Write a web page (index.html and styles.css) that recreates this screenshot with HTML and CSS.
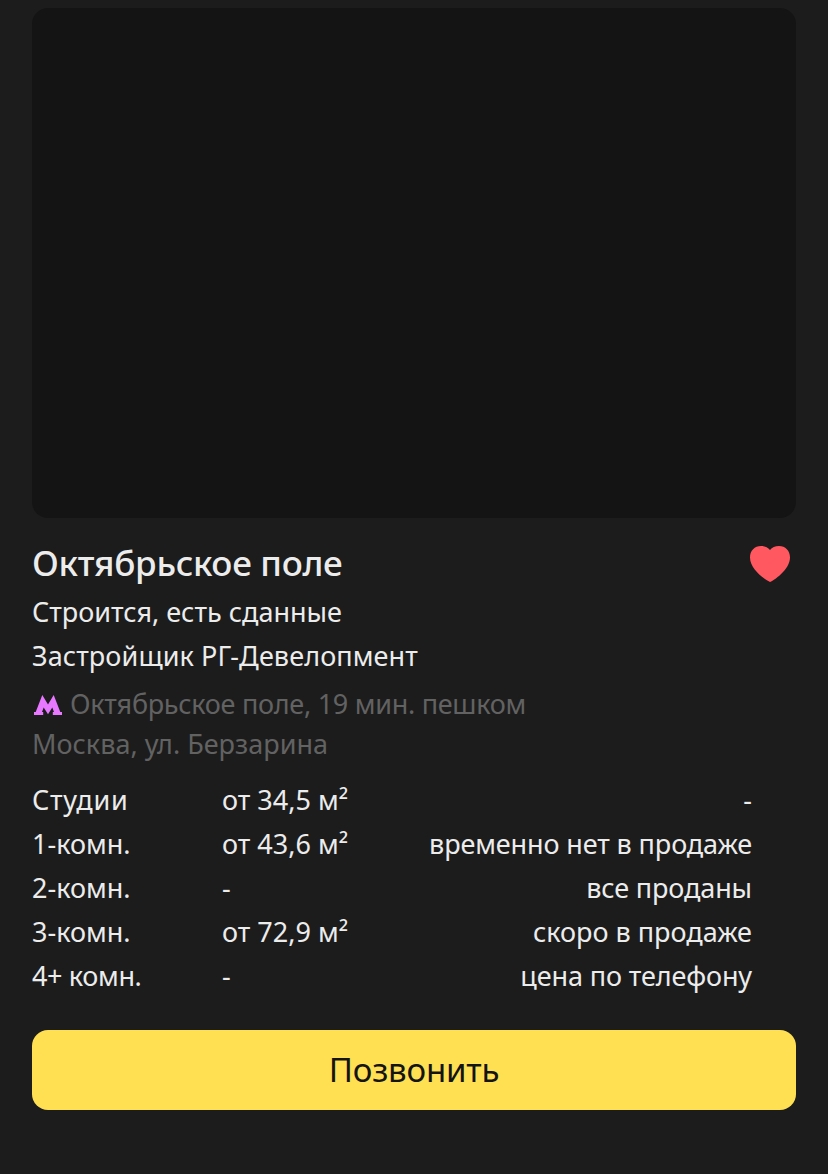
FILE: index.html
```html
<!DOCTYPE html>
<html lang="ru">
<head>
<meta charset="utf-8">
<title>Октябрьское поле</title>
<link rel="stylesheet" href="styles.css">
</head>
<body>
<main class="card">
  <div class="photo"></div>
  <header class="head">
    <h1 class="title">Октябрьское поле</h1>
    <svg class="heart" viewBox="0 0 40 36" aria-hidden="true"><path d="M20 36C17 35 0 24 0 11.500C0 4.500 4.700 0 11 0C15 0 18 1.500 20 4C22 1.500 25 0 29 0C35.300 0 40 4.500 40 11.500C40 24 23 35 20 36Z"/></svg>
  </header>
  <p class="line">Строится, есть сданные</p>
  <p class="line developer">Застройщик РГ-Девелопмент</p>
  <div class="place">
    <p class="metro"><svg class="metro-icon" viewBox="0 0 28 20" aria-hidden="true"><path d="M8.300 0L14 9.500L19.700 0L26.300 17H28V20H18.800V17H20L18.300 12.500L14 19.200L9.700 12.500L8 17H9.200V20H0V17H1.700Z"/></svg><span>Октябрьское поле, 19 мин. пешком</span></p>
    <p class="address">Москва, ул. Берзарина</p>
  </div>
  <div class="rooms">
    <div class="row"><span class="studio">Студии</span><span>от 34,5 м²</span><span class="price">-</span></div>
    <div class="row"><span>1-комн.</span><span>от 43,6 м²</span><span class="price tight">временно нет в продаже</span></div>
    <div class="row"><span>2-комн.</span><span>-</span><span class="price tight">все проданы</span></div>
    <div class="row"><span>3-комн.</span><span>от 72,9 м²</span><span class="price">скоро в продаже</span></div>
    <div class="row"><span class="large">4+ комн.</span><span>-</span><span class="price tight">цена по телефону</span></div>
  </div>
  <button class="call">Позвонить</button>
</main>
</body>
</html>
```
FILE: styles.css
```css
* { box-sizing: border-box; }
body { margin: 0; background: #1c1c1c; color: #ececec; font-family: "Noto Sans", sans-serif; font-size: 27px; }
h1, p { margin: 0; }
.card { min-height: 1174px; padding: 8px 32px 64px; }
.photo { height: 510px; border-radius: 16px; background: #141414; }
.head { display: flex; justify-content: space-between; align-items: center; height: 48px; margin-top: 22px; padding-right: 6px; }
.title { padding-bottom: 2px; font-size: 35px; line-height: 46px; font-weight: 500; letter-spacing: -.3px; white-space: nowrap; }
.heart { width: 40px; height: 36px; fill: #ff5860; }
.line { height: 44px; line-height: 44px; white-space: nowrap; }
.developer { letter-spacing: .1px; }
.head + .line { margin-top: 2px; }
.place { margin-top: 6px; color: #626262; line-height: 40px; white-space: nowrap; }
.metro { display: flex; align-items: center; height: 40px; padding-left: 2px; letter-spacing: -.28px; }
.metro-icon { width: 28px; height: 20px; margin: 2px 8px 0 0; fill: #e778ff; }
.rooms { margin-top: 14px; padding-right: 44px; }
.row { display: grid; grid-template-columns: 190px 170px 1fr; height: 44px; line-height: 44px; white-space: nowrap; }
.studio { letter-spacing: .7px; }
.large { letter-spacing: -.35px; }
.price { text-align: right; }
.tight { letter-spacing: -.12px; }
.call { display: block; width: 100%; height: 80px; margin-top: 32px; padding: 0; border: 0; border-radius: 16px; background: #ffe052; color: #141414; font: 33px/80px "Noto Sans", sans-serif; letter-spacing: -.2px; }
```
